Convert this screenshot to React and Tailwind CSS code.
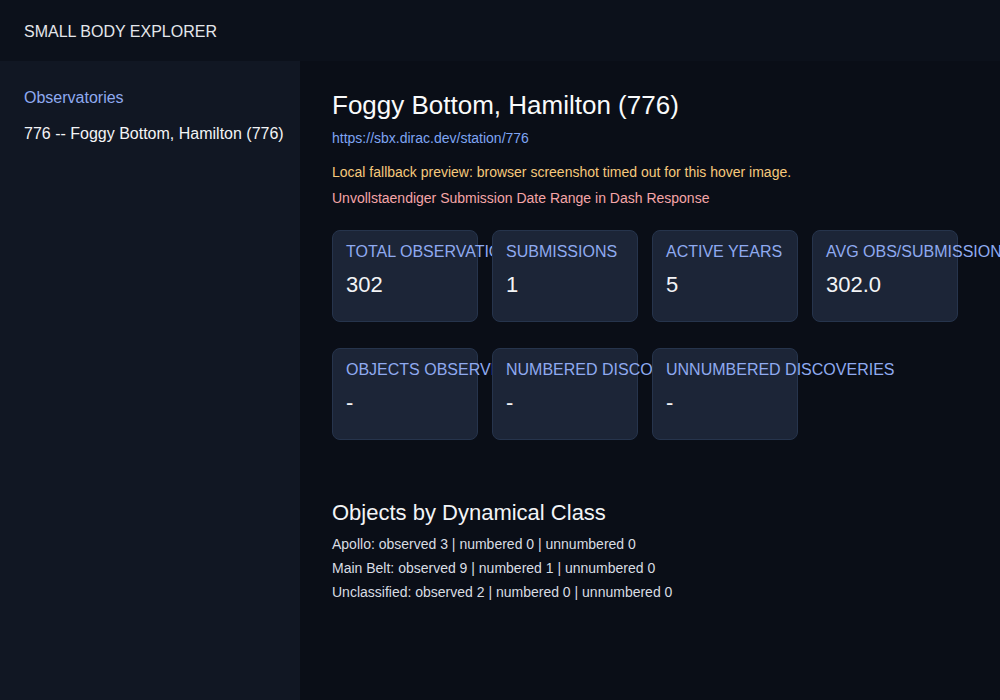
import React from "react";

const statsTop = [
  { label: "Total Observations", value: "302" },
  { label: "Submissions", value: "1" },
  { label: "Active Years", value: "5" },
  { label: "Avg Obs/Submission", value: "302.0" },
];

const statsBottom = [
  { label: "Objects Observed", value: "-" },
  { label: "Numbered Discoveries", value: "-" },
  { label: "Unnumbered Discoveries", value: "-" },
];

const classes = [
  "Apollo: observed 3 | numbered 0 | unnumbered 0",
  "Main Belt: observed 9 | numbered 1 | unnumbered 0",
  "Unclassified: observed 2 | numbered 0 | unnumbered 0",
];

function StatCard({ label, value }) {
  // fixed width cards, long labels spill over (next card paints on top)
  return (
    <div className="w-[146px] h-[92px] shrink-0 rounded-lg border border-[#26344c] bg-[#1c2537] px-[13px] pt-[11px] whitespace-nowrap">
      <div className="text-[16px] leading-[20px] uppercase text-[#8faaf0]">{label}</div>
      <div className="mt-[9px] text-[22px] leading-[28px] text-[#f3f4f6]">{value}</div>
    </div>
  );
}

export default function App() {
  return (
    <div className="h-[700px] flex flex-col bg-[#0a0e17] font-['Liberation_Sans',Arial,sans-serif] overflow-hidden">
      <header className="h-[61px] shrink-0 flex items-center px-6 pt-[2px] bg-[#0c111b]">
        <span className="text-[16px] leading-[24px] text-[#e5e7eb]">SMALL BODY EXPLORER</span>
      </header>

      <div className="flex flex-1 min-h-0">
        <aside className="w-[300px] shrink-0 bg-[#111723] pl-6 pt-[25px] whitespace-nowrap">
          <div className="text-[16px] leading-[24px] text-[#8faaf0]">Observatories</div>
          <div className="mt-3 text-[16px] leading-[24px] text-[#f3f4f6]">776 -- Foggy Bottom, Hamilton (776)</div>
        </aside>

        <main className="flex-1 pl-8 pt-7 text-[#e5e7eb]">
          <h1 className="text-[26px] leading-[32px] text-[#f9fafb]">Foggy Bottom, Hamilton (776)</h1>
          <a className="block mt-[7px] text-[14px] leading-[20px] text-[#7fa5f3]" href="#">
            https://sbx.dirac.dev/station/776
          </a>
          <p className="mt-[14px] text-[14px] leading-[20px] text-[#f6c97c]">
            Local fallback preview: browser screenshot timed out for this hover image.
          </p>
          <p className="mt-[6px] text-[14px] leading-[20px] text-[#f5a5a8]">
            Unvollstaendiger Submission Date Range in Dash Response
          </p>

          <div className="mt-[22px] flex gap-[14px]">
            {statsTop.map((s) => (
              <StatCard key={s.label} {...s} />
            ))}
          </div>
          <div className="mt-[26px] flex gap-[14px]">
            {statsBottom.map((s) => (
              <StatCard key={s.label} {...s} />
            ))}
          </div>

          <h2 className="mt-[59px] text-[22px] leading-[28px] text-[#f3f4f6]">Objects by Dynamical Class</h2>
          <div className="mt-[5px]">
            {classes.map((line) => (
              <div key={line} className="text-[14px] leading-[24px] text-[#d9dde3]">{line}</div>
            ))}
          </div>
        </main>
      </div>
    </div>
  );
}
